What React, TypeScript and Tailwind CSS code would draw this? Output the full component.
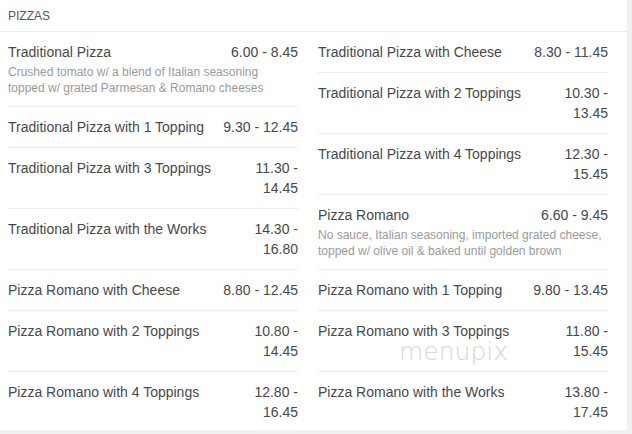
type Item = { name: string; price: string; desc?: string };

const left: Item[] = [
  {
    name: "Traditional Pizza",
    price: "6.00 - 8.45",
    desc: "Crushed tomato w/ a blend of Italian seasoning topped w/ grated Parmesan & Romano cheeses",
  },
  { name: "Traditional Pizza with 1 Topping", price: "9.30 - 12.45" },
  { name: "Traditional Pizza with 3 Toppings", price: "11.30 - 14.45" },
  { name: "Traditional Pizza with the Works", price: "14.30 - 16.80" },
  { name: "Pizza Romano with Cheese", price: "8.80 - 12.45" },
  { name: "Pizza Romano with 2 Toppings", price: "10.80 - 14.45" },
  { name: "Pizza Romano with 4 Toppings", price: "12.80 - 16.45" },
];

const right: Item[] = [
  { name: "Traditional Pizza with Cheese", price: "8.30 - 11.45" },
  { name: "Traditional Pizza with 2 Toppings", price: "10.30 - 13.45" },
  { name: "Traditional Pizza with 4 Toppings", price: "12.30 - 15.45" },
  {
    name: "Pizza Romano",
    price: "6.60 - 9.45",
    desc: "No sauce, Italian seasoning, imported grated cheese, topped w/ olive oil & baked until golden brown",
  },
  { name: "Pizza Romano with 1 Topping", price: "9.80 - 13.45" },
  { name: "Pizza Romano with 3 Toppings", price: "11.80 - 15.45" },
  { name: "Pizza Romano with the Works", price: "13.80 - 17.45" },
];

const Row = ({ item, last }: { item: Item; last: boolean }) => (
  <div className={last ? "pt-[10px] pb-[8px]" : "pt-[10px] pb-[10px] border-b border-[#ececec]"}>
    <div className="flex justify-between text-[14px] leading-[20px] text-[#484848]">
      <span>{item.name}</span>
      <span className="w-[78px] shrink-0 text-right">{item.price}</span>
    </div>
    {item.desc && (
      <div className="mt-[2px] text-[12px] leading-[16px] text-[#9a9a9a]">{item.desc}</div>
    )}
  </div>
);

const Column = ({ items }: { items: Item[] }) => (
  <div className="w-[290px] flex flex-col">
    {items.map((it, i) => (
      <Row key={it.name} item={it} last={i === items.length - 1} />
    ))}
  </div>
);

export default function App() {
  return (
    <div
      className="w-[632px] h-[434px] bg-[#f1f1f3] overflow-hidden"
      style={{ fontFamily: '"Liberation Sans", Arial, sans-serif' }}
    >
      <div className="relative w-[627px] h-[430px] bg-white">
        <div className="h-[32px] border-b border-[#ececec] px-2 flex items-center text-[12px] text-[#555]">
          PIZZAS
        </div>
        <div className="flex gap-[20px] px-2">
          <Column items={left} />
          <Column items={right} />
        </div>
        <div className="absolute left-[399px] top-[342px] text-[25px] leading-[19px] font-extralight text-[#d6d6d6] font-['DejaVu_Sans',sans-serif]">
          menupix
        </div>
      </div>
    </div>
  );
}
